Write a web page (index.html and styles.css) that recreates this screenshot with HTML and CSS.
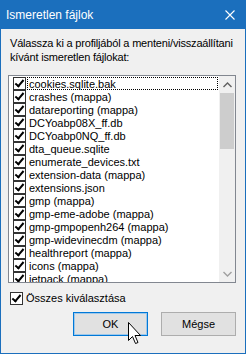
FILE: index.html
```html
<!DOCTYPE html>
<html lang="hu">
<head>
    <meta charset="UTF-8">
    <meta name="viewport" content="width=device-width, initial-scale=1.0">
    <title>Ismeretlen fájlok</title>
<link rel="stylesheet" href="styles.css">
</head>
<body>

    <div class="window">
        <div class="titlebar">
            <span class="title">Ismeretlen fájlok</span>
            <svg class="close" width="10" height="10" viewBox="0 0 10 10">
                <path d="M0.5 0.5 L9.5 9.5 M9.5 0.5 L0.5 9.5" stroke="#fff" stroke-width="1.1" fill="none"/>
            </svg>
        </div>

        <div class="content">
            <p class="prompt">Válassza ki a profiljából a menteni/visszaállítani<br>kívánt ismeretlen fájlokat:</p>

            <div class="listbox">
                <ul class="items">
                    <li class="item focused"><span class="check"></span><span class="name">cookies.sqlite.bak</span></li>
                    <li class="item"><span class="check"></span><span class="name">crashes (mappa)</span></li>
                    <li class="item"><span class="check"></span><span class="name">datareporting (mappa)</span></li>
                    <li class="item"><span class="check"></span><span class="name">DCYoabp08X_ff.db</span></li>
                    <li class="item"><span class="check"></span><span class="name">DCYoabp0NQ_ff.db</span></li>
                    <li class="item"><span class="check"></span><span class="name">dta_queue.sqlite</span></li>
                    <li class="item"><span class="check"></span><span class="name">enumerate_devices.txt</span></li>
                    <li class="item"><span class="check"></span><span class="name">extension-data (mappa)</span></li>
                    <li class="item"><span class="check"></span><span class="name">extensions.json</span></li>
                    <li class="item"><span class="check"></span><span class="name">gmp (mappa)</span></li>
                    <li class="item"><span class="check"></span><span class="name">gmp-eme-adobe (mappa)</span></li>
                    <li class="item"><span class="check"></span><span class="name">gmp-gmpopenh264 (mappa)</span></li>
                    <li class="item"><span class="check"></span><span class="name">gmp-widevinecdm (mappa)</span></li>
                    <li class="item"><span class="check"></span><span class="name">healthreport (mappa)</span></li>
                    <li class="item"><span class="check"></span><span class="name">icons (mappa)</span></li>
                    <li class="item"><span class="check"></span><span class="name">jetpack (mappa)</span></li>
                </ul>
                <div class="scrollbar">
                    <div class="arrow">
                        <svg width="9" height="6" viewBox="0 0 9 6"><path d="M0.5 5 L4.5 1 L8.5 5" stroke="#606060" stroke-width="1.4" fill="none"/></svg>
                    </div>
                    <div class="track"><div class="thumb"></div></div>
                    <div class="arrow">
                        <svg width="9" height="6" viewBox="0 0 9 6"><path d="M0.5 1 L4.5 5 L8.5 1" stroke="#a0a0a0" stroke-width="1.4" fill="none"/></svg>
                    </div>
                </div>
            </div>

            <div class="selectall">
                <span class="check"></span>
                <span>Összes kiválasztása</span>
            </div>

            <div class="buttons">
                <button class="btn default">OK</button>
                <button class="btn">Mégse</button>
            </div>
        </div>

        <svg class="cursor" width="14" height="24" viewBox="0 0 14 24">
            <path d="M0.5 0.5 L0.5 18.5 L4.5 14.5 L7.5 21.5 L10 20.5 L7 13.5 L12.5 13.5 Z" fill="#fff" stroke="#000" stroke-width="1"/>
        </svg>
    </div>

</body>
</html>
```

FILE: styles.css
```css
* {
    padding: 0;
    margin: 0;
    box-sizing: border-box;
}

body {
    width: 246px;
    height: 354px;
    overflow: hidden;
    font-family: "Liberation Sans", Arial, sans-serif;
    font-size: 11px;
    color: #000;
    user-select: none;
}

.window {
    position: relative;
    width: 246px;
    height: 354px;
    border: 1px solid #1b6fbd;
    background-color: #f0f0f0;
    display: flex;
    flex-direction: column;
}

.titlebar {
    height: 28px;
    background-color: #1b6fbd;
    color: white;
    display: flex;
    align-items: center;
    justify-content: space-between;
    padding: 0 10px 0 5px;
}

.title {
    font-size: 12px;
}

.content {
    flex: 1;
    padding: 7px 9px 0 7px;
    display: flex;
    flex-direction: column;
}

.prompt {
    line-height: 14px;
    padding-left: 2px;
    margin-bottom: 11px;
    white-space: nowrap;
    letter-spacing: -0.18px;
}

.listbox {
    height: 208px;
    border: 1px solid #828790;
    background-color: white;
    display: flex;
    overflow: hidden;
}

.items {
    list-style: none;
    flex: 1;
    padding: 1px 1px 0 4px;
}

.item {
    height: 13px;
    display: flex;
    align-items: center;
}

.name {
    flex: 1;
    height: 13px;
    line-height: 12px;
    margin-left: 1px;
    padding-left: 1px;
    border: 1px solid transparent;
    white-space: nowrap;
}

.focused .name {
    border: 1px dotted #000;
}

.check {
    position: relative;
    width: 13px;
    height: 13px;
    border: 1px solid #333;
    background-color: white;
    flex-shrink: 0;
}

.check::after {
    content: "";
    position: absolute;
    left: 3px;
    top: 0px;
    width: 3px;
    height: 7px;
    border-right: 2px solid #000;
    border-bottom: 2px solid #000;
    transform: rotate(40deg);
}

.scrollbar {
    width: 16px;
    background-color: #f0f0f0;
    display: flex;
    flex-direction: column;
}

.arrow {
    height: 17px;
    display: flex;
    align-items: center;
    justify-content: center;
}

.track {
    flex: 1;
    padding: 0 1px;
}

.thumb {
    height: 56px;
    background-color: #cdcdcd;
}

.selectall {
    display: flex;
    align-items: center;
    gap: 3px;
    margin-top: 8px;
    padding-left: 2px;
    height: 14px;
}

.buttons {
    display: flex;
    justify-content: flex-end;
    gap: 13px;
    margin-top: 7px;
    padding-right: 0;
}

.btn {
    width: 75px;
    height: 24px;
    font-family: "Liberation Sans", Arial, sans-serif;
    font-size: 11px;
    background-color: #e1e1e1;
    border: 1px solid #adadad;
    color: #000;
}

.btn.default {
    border: 1px solid #0078d7;
    box-shadow: inset 0 0 0 1px #9ec8ea;
}

.cursor {
    position: absolute;
    left: 127px;
    top: 321px;
}
```
